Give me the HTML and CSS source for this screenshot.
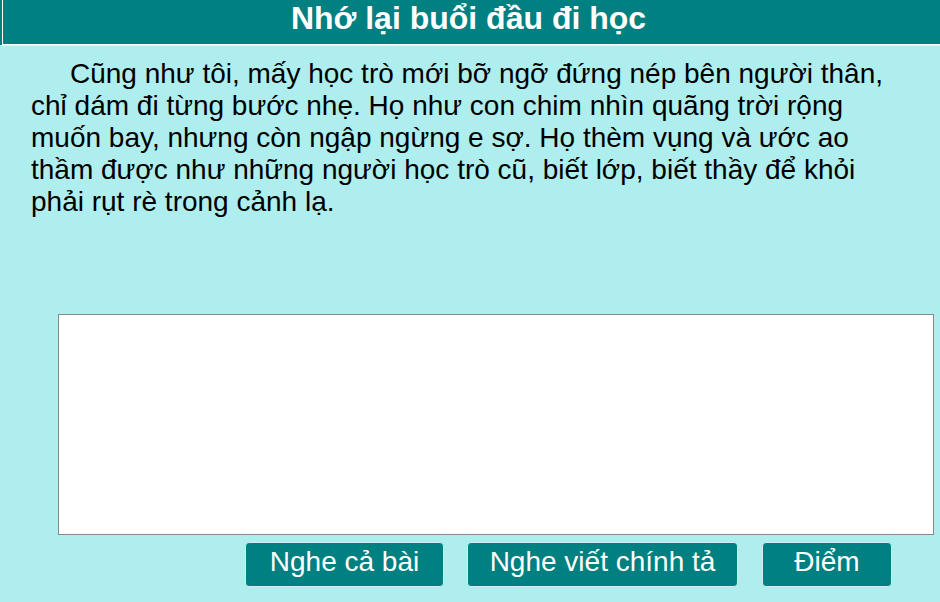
FILE: index.html
```html
<!DOCTYPE html>
<html>
  <head>
    <title>Nhớ lại buổi đầu đi học</title>
    <link rel="stylesheet" href="styles.css">
  </head>
  <body>
    <div class="page">
      <div class="header">
        <h1 class="title">Nhớ lại buổi đầu đi học</h1>
      </div>
      <p class="passage">Cũng như tôi, mấy học trò mới bỡ ngỡ đứng nép bên người thân, chỉ dám đi từng bước nhẹ. Họ như con chim nhìn quãng trời rộng muốn bay, nhưng còn ngập ngừng e sợ. Họ thèm vụng và ước ao thầm được như những người học trò cũ, biết lớp, biết thầy để khỏi phải rụt rè trong cảnh lạ.</p>
      <textarea class="answer"></textarea>
      <div class="buttons">
        <button class="btn btn-all">Nghe cả bài</button>
        <button class="btn btn-write">Nghe viết chính tả</button>
        <button class="btn btn-score">Điểm</button>
      </div>
    </div>
  </body>
</html>
```

FILE: styles.css
```css
body {
  font-family: "Liberation Sans", Arial, sans-serif;
  margin: 0;
  padding: 0;
  background-color: #afeeee;
}
.page {
  width: 940px;
  height: 602px;
  overflow: hidden;
}
.header {
  padding-left: 2px;
  background-color: #008080;
  border-bottom: 1px solid #d4f7f7;
}
.title {
  margin: 0;
  height: 45px;
  padding-right: 6px;
  line-height: 36px;
  color: #fff;
  font-size: 32px;
  font-weight: bold;
  text-align: center;
  border-left: 1px solid #fff;
  border-bottom: 1px solid #fff;
  box-sizing: border-box;
}
.passage {
  margin: 12px 50px 0 31px;
  height: 256px;
  font-size: 28px;
  line-height: 32px;
  text-indent: 39px;
  color: #000;
}
.answer {
  display: block;
  margin: 0 0 0 58px;
  width: 876px;
  height: 221px;
  box-sizing: border-box;
  border: 1px solid #888;
  background: #fff;
  resize: none;
}
.buttons {
  display: flex;
  margin: 7px 0 0 245px;
}
.btn {
  height: 45px;
  background-color: #008080;
  color: #fff;
  border: 1px solid #d0f0f0;
  border-radius: 4px;
  font-family: "Liberation Sans", Arial, sans-serif;
  font-size: 28px;
  padding: 0 0 6px;
  cursor: pointer;
}
.btn-all {
  width: 199px;
}
.btn-write {
  width: 271px;
  margin-left: 23px;
}
.btn-score {
  width: 130px;
  margin-left: 24px;
}
```
